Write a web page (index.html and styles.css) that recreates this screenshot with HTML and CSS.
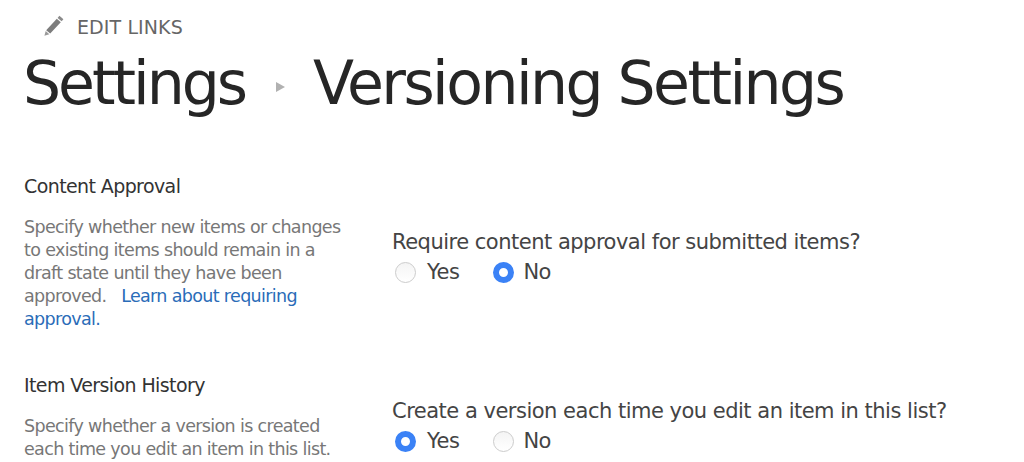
FILE: index.html
```html
<!DOCTYPE html>
<html>

<head>
  <meta charset="UTF-8">
  <title>Versioning Settings</title>
  <link rel="stylesheet" href="styles.css">
</head>

<body>
  <div class="edit-links">
    <svg class="pencil" viewBox="0 0 22 22" width="22" height="22">
      <path d="M16.4 0.8 L20.4 4.2 L18.6 6.3 L14.6 2.9 Z" fill="#8a8a8a" />
      <path d="M13.8 3.8 L17.8 7.2 L7.2 18.6 L3.2 15.2 Z" fill="#7d7d7d" />
      <path d="M2.7 16 L6.4 19.2 L1.4 20.8 Z" fill="#9a9a9a" />
    </svg>
    <span>EDIT LINKS</span>
  </div>
  <h1 class="title">
    <span>Settings</span>
    <span class="arrow"></span>
    <span class="current">Versioning Settings</span>
  </h1>

  <section class="row first">
    <div class="info">
      <h2>Content Approval</h2>
      <p>Specify whether new items or changes to existing items should remain in a draft state until they have been approved. &nbsp; <a href="#">Learn about requiring approval.</a></p>
    </div>
    <div class="control">
      <div class="question">Require content approval for submitted items?</div>
      <div class="options">
        <label class="option"><input type="radio" name="approval">Yes</label>
        <label class="option"><input type="radio" name="approval" checked>No</label>
      </div>
    </div>
  </section>

  <section class="row second">
    <div class="info">
      <h2>Item Version History</h2>
      <p>Specify whether a version is created each time you edit an item in this list.</p>
    </div>
    <div class="control">
      <div class="question">Create a version each time you edit an item in this list?</div>
      <div class="options">
        <label class="option"><input type="radio" name="history" checked>Yes</label>
        <label class="option"><input type="radio" name="history">No</label>
      </div>
    </div>
  </section>
</body>

</html>
```

FILE: styles.css
```css
html,
body {
  height: 100%;
}

body {
  margin: 0;
  overflow: hidden;
  background: #fff;
  font-family: "DejaVu Sans", sans-serif;
  color: #444;
}

.edit-links {
  display: flex;
  align-items: center;
  gap: 12px;
  height: 24px;
  padding: 15px 0 0 43px;
  font-size: 19px;
  letter-spacing: 0.1px;
  color: #666;
}

.pencil {
  margin-top: -2px;
}

.title {
  display: flex;
  align-items: center;
  margin: 0;
  padding: 9px 0 0 23px;
  font-size: 60px;
  line-height: 70px;
  font-weight: normal;
  letter-spacing: -3px;
  color: #262626;
}

.title .current {
  letter-spacing: -2.55px;
}

.arrow {
  width: 0;
  height: 0;
  margin: 8px 28px 0 31px;
  border-left: 9px solid #b1b1b1;
  border-top: 5px solid transparent;
  border-bottom: 5px solid transparent;
}

.row {
  display: flex;
  padding-left: 24px;
}

.row.first {
  padding-top: 56px;
}

.row.second {
  padding-top: 42px;
}

.info {
  width: 368px;
  flex-shrink: 0;
}

.info h2 {
  margin: 0;
  font-size: 19px;
  line-height: 24px;
  font-weight: normal;
  letter-spacing: -0.6px;
  color: #333;
}

.info p {
  width: 325px;
  margin: 18px 0 0;
  font-size: 17.5px;
  line-height: 23px;
  letter-spacing: -0.65px;
  color: #777;
}

.info a {
  color: #2a6cb8;
  text-decoration: none;
}

.control {
  padding-top: 55px;
}

.second .control {
  padding-top: 25px;
}

.question {
  font-size: 21px;
  line-height: 26px;
  letter-spacing: -0.5px;
  color: #444;
}

.options {
  display: flex;
  gap: 34px;
  padding: 4px 0 0 3px;
}

.option {
  display: flex;
  align-items: center;
  gap: 11px;
  font-size: 21px;
  line-height: 26px;
  letter-spacing: -0.5px;
  color: #444;
}

.option + .option {
  gap: 9px;
}

.option input {
  appearance: none;
  width: 21px;
  height: 21px;
  margin: 0;
  border: 1px solid #ccc;
  border-radius: 50%;
  background: linear-gradient(#f4f4f4, #fff);
}

.option input:checked {
  border: 6.5px solid #3b82f6;
  background: #fff;
}
```
